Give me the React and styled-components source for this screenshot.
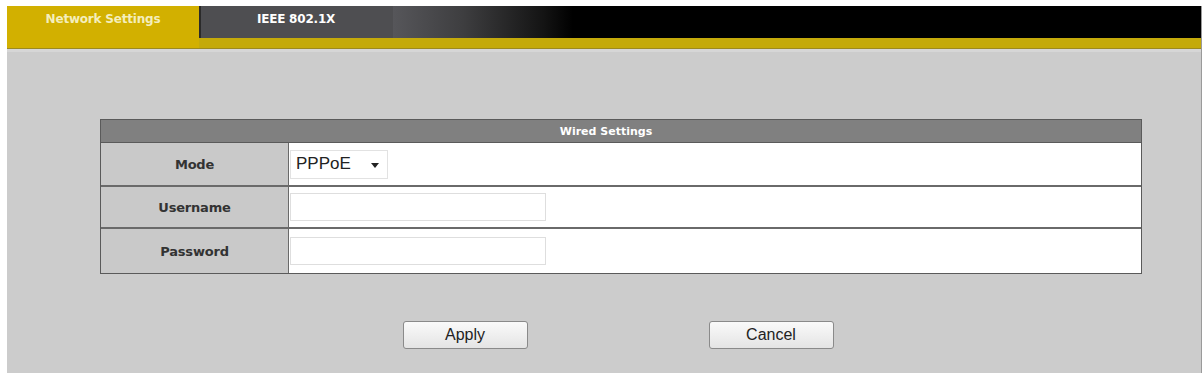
import React from 'react';
import styled, { createGlobalStyle } from 'styled-components';

const GlobalStyle = createGlobalStyle`
  html, body {
    margin: 0;
    padding: 0;
    background: #ffffff;
    font-family: 'Liberation Sans', Arial, sans-serif;
  }
`;

const Page = styled.div`
  padding: 6px 1px 2px 7px;
`;

const Panel = styled.div`
  border-right: 1px solid #9a9a9a;
  border-bottom: 1px solid #bdbdbd;
`;

const TabBar = styled.div`
  display: flex;
  height: 32px;
  background: #000;
`;

const Tab = styled.div`
  width: ${(p) => p.$width}px;
  height: ${(p) => (p.$active ? 42 : 32)}px;
  display: flex;
  justify-content: center;
  padding-top: 6px;
  box-sizing: border-box;
  font-family: 'DejaVu Sans', Verdana, sans-serif;
  font-size: 12px;
  font-weight: bold;
  letter-spacing: -0.2px;
  color: ${(p) => (p.$active ? '#f4eebc' : '#ffffff')};
  background: ${(p) => (p.$active ? '#d2b000' : '#4e4e51')};
  box-shadow: ${(p) => (p.$active ? 'none' : 'inset 2px 0 0 #2a2a2a')};
  position: relative;
  z-index: 1;
`;

const TabFiller = styled.div`
  flex: 1;
  background: linear-gradient(to right, #56565a 0, #3e3e40 70px, #141414 150px, #000 180px, #000 100%);
`;

const Strip = styled.div`
  height: 10px;
  background: #c4aa0a;
  border-bottom: 1px solid #9c8a20;
`;

const Body = styled.div`
  background: #cccccc;
  border-top: 3px solid #d6d6d6;
  padding: 67px 59px 24px 93px;
`;

const Table = styled.div`
  border: 1px solid #5a5a5a;
  background: #ffffff;
`;

const Header = styled.div`
  height: 22px;
  background: #808080;
  color: #ffffff;
  font-family: 'DejaVu Sans', Verdana, sans-serif;
  font-size: 11px;
  font-weight: bold;
  display: flex;
  align-items: center;
  justify-content: center;
  padding-right: 30px;
  border-bottom: 1px solid #5a5a5a;
`;

const Row = styled.div`
  display: grid;
  grid-template-columns: 188px 1fr;
  box-sizing: border-box;
  height: ${(p) => p.$h}px;
  border-bottom: ${(p) => (p.$last ? 'none' : '2px solid #6a6a6a')};
`;

const Label = styled.div`
  background: #c9c9c9;
  border-right: 1px solid #6a6a6a;
  display: flex;
  align-items: center;
  justify-content: center;
  font-family: 'DejaVu Sans', Verdana, sans-serif;
  font-size: 13px;
  font-weight: bold;
  letter-spacing: -0.2px;
  color: #333333;
`;

const Value = styled.div`
  display: flex;
  align-items: center;
  padding-left: 1px;
`;

const SelectBox = styled.div`
  width: 98px;
  height: 29px;
  border: 1px solid #e2e2e2;
  box-sizing: border-box;
  display: flex;
  align-items: center;
  padding-left: 5px;
  gap: 20px;
  font-size: 17px;
  color: #222;
`;

const Caret = styled.span`
  width: 0;
  height: 0;
  margin-top: 2px;
  border-left: 4px solid transparent;
  border-right: 4px solid transparent;
  border-top: 5px solid #222;
`;

const TextInput = styled.input`
  width: 256px;
  height: 28px;
  box-sizing: border-box;
  border: 1px solid #dedede;
  background: #fff;
  padding: 0 4px;
  font-size: 13px;
  font-family: inherit;
  outline: none;
`;

const Actions = styled.div`
  display: flex;
  justify-content: center;
  gap: 181px;
  margin-top: 47px;
  padding-right: 6px;
`;

const Button = styled.button`
  width: 125px;
  height: 28px;
  border: 1px solid #8a8a8a;
  border-radius: 3px;
  background: linear-gradient(#fafafa, #e4e4e4);
  font-family: inherit;
  font-size: 16px;
  color: #222;
`;

const App = () => {
  return (
    <Page>
      <GlobalStyle />
      <Panel>
        <TabBar>
          <Tab $active $width={192}>Network Settings</Tab>
          <Tab $width={194}>IEEE 802.1X</Tab>
          <TabFiller />
        </TabBar>
        <Strip />
        <Body>
          <Table>
            <Header>Wired Settings</Header>
            <Row $h={44}>
              <Label>Mode</Label>
              <Value>
                <SelectBox>
                  PPPoE <Caret />
                </SelectBox>
              </Value>
            </Row>
            <Row $h={42}>
              <Label>Username</Label>
              <Value>
                <TextInput type='text' />
              </Value>
            </Row>
            <Row $h={44} $last>
              <Label>Password</Label>
              <Value>
                <TextInput type='password' />
              </Value>
            </Row>
          </Table>
          <Actions>
            <Button>Apply</Button>
            <Button>Cancel</Button>
          </Actions>
        </Body>
      </Panel>
    </Page>
  );
};

export default App;
